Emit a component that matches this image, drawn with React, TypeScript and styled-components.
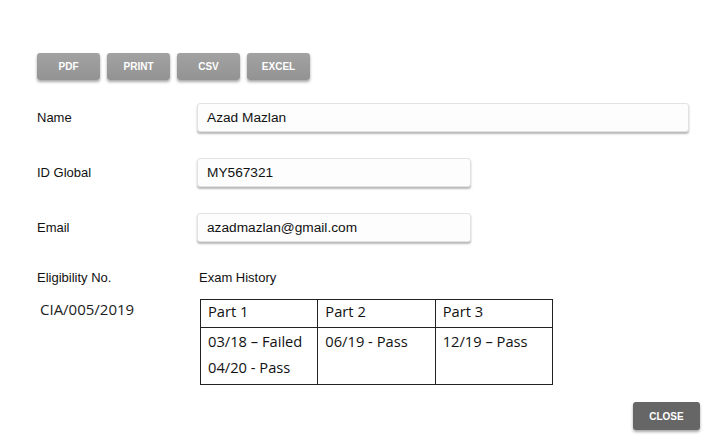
import React from "react";
import styled, { createGlobalStyle } from "styled-components";

const GlobalStyle = createGlobalStyle`
  html, body {
    margin: 0;
    padding: 0;
    background: #ffffff;
    font-family: "Liberation Sans", Arial, sans-serif;
    color: #111;
  }
`;

const exportButtons = ["PDF", "PRINT", "CSV", "EXCEL"];

const examHistory = [
  { part: "Part 1", results: ["03/18 \u2013 Failed", "04/20 - Pass"] },
  { part: "Part 2", results: ["06/19 - Pass"] },
  { part: "Part 3", results: ["12/19 \u2013 Pass"] },
];

const App: React.FC = () => {
  return (
    <>
      <GlobalStyle />
      <StyledPage>
        <StyledToolbar>
          {exportButtons.map((label) => (
            <StyledGrayButton key={label}>{label}</StyledGrayButton>
          ))}
        </StyledToolbar>

        <StyledForm>
          <StyledLabel>Name</StyledLabel>
          <StyledField wide>Azad Mazlan</StyledField>

          <StyledLabel>ID Global</StyledLabel>
          <StyledField>MY567321</StyledField>

          <StyledLabel>Email</StyledLabel>
          <StyledField>azadmazlan@gmail.com</StyledField>
        </StyledForm>

        <StyledHistory>
          <StyledColumn>
            <StyledLabel>Eligibility No.</StyledLabel>
            <StyledEligibility>CIA/005/2019</StyledEligibility>
          </StyledColumn>
          <StyledColumn>
            <StyledSubLabel>Exam History</StyledSubLabel>
            <StyledTable>
              <thead>
                <tr>
                  {examHistory.map((col) => (
                    <StyledHeadCell key={col.part}>{col.part}</StyledHeadCell>
                  ))}
                </tr>
              </thead>
              <tbody>
                <tr>
                  {examHistory.map((col) => (
                    <StyledBodyCell key={col.part}>
                      {col.results.map((r) => (
                        <div key={r}>{r}</div>
                      ))}
                    </StyledBodyCell>
                  ))}
                </tr>
              </tbody>
            </StyledTable>
          </StyledColumn>
        </StyledHistory>

        <StyledFooter>
          <StyledCloseButton>CLOSE</StyledCloseButton>
        </StyledFooter>
      </StyledPage>
    </>
  );
};

const StyledPage = styled.div`
  box-sizing: border-box;
  width: 724px;
  height: 445px;
  padding: 53px 35px 0 37px;
  display: flex;
  flex-direction: column;
`;

const StyledToolbar = styled.div`
  display: flex;
  gap: 7px;
`;

const StyledGrayButton = styled.button`
  box-sizing: border-box;
  width: 63px;
  height: 27px;
  border: none;
  border-radius: 3px;
  background: linear-gradient(#a2a2a2, #939393);
  color: #fff;
  font-family: "Liberation Sans", Arial, sans-serif;
  font-size: 10px;
  font-weight: 700;
  box-shadow: 0 2px 3px rgba(0, 0, 0, 0.35);
  padding: 0;
`;

const StyledForm = styled.div`
  display: grid;
  grid-template-columns: 160px 1fr;
  row-gap: 26px;
  align-items: center;
  margin-top: 23px;
`;

const StyledLabel = styled.div`
  font-size: 13px;
  color: #111;
  line-height: 16px;
`;

const StyledSubLabel = styled(StyledLabel)`
  padding-left: 2px;
`;

const StyledField = styled.div<{ wide?: boolean }>`
  box-sizing: border-box;
  width: ${(props) => (props.wide ? "492px" : "274px")};
  height: 29px;
  display: flex;
  align-items: center;
  padding-left: 9px;
  background: #fdfdfd;
  border: 1px solid #e2e2e2;
  border-radius: 3px;
  box-shadow: 0 2px 2px rgba(0, 0, 0, 0.28);
  font-size: 13.7px;
  color: #111;
`;

const StyledHistory = styled.div`
  display: grid;
  grid-template-columns: 160px 1fr;
  margin-top: 28px;
`;

const StyledColumn = styled.div`
  display: flex;
  flex-direction: column;
`;

const StyledEligibility = styled.div`
  font-family: "Open Sans", sans-serif;
  font-size: 15px;
  line-height: 20px;
  color: #222;
  margin-top: 13px;
  padding-left: 3px;
`;

const StyledTable = styled.table`
  border-collapse: collapse;
  margin-top: 13px;
  margin-left: 3px;
  width: 353px;
  table-layout: fixed;
  font-family: "Open Sans", sans-serif;
  font-size: 14.7px;
  color: #111;
`;

const StyledHeadCell = styled.th`
  border: 1px solid #222;
  height: 28px;
  box-sizing: border-box;
  text-align: left;
  font-weight: 400;
  padding: 0 7px;
  line-height: 22px;
  vertical-align: top;
`;

const StyledBodyCell = styled.td`
  border: 1px solid #222;
  height: 56px;
  padding: 0 7px;
  vertical-align: top;
  line-height: 26px;
`;

const StyledFooter = styled.div`
  display: flex;
  justify-content: flex-end;
  margin-top: auto;
  margin-right: -11px;
  margin-bottom: 15px;
`;

const StyledCloseButton = styled(StyledGrayButton)`
  width: 67px;
  height: 28px;
  background: #666;
`;

export default App;
